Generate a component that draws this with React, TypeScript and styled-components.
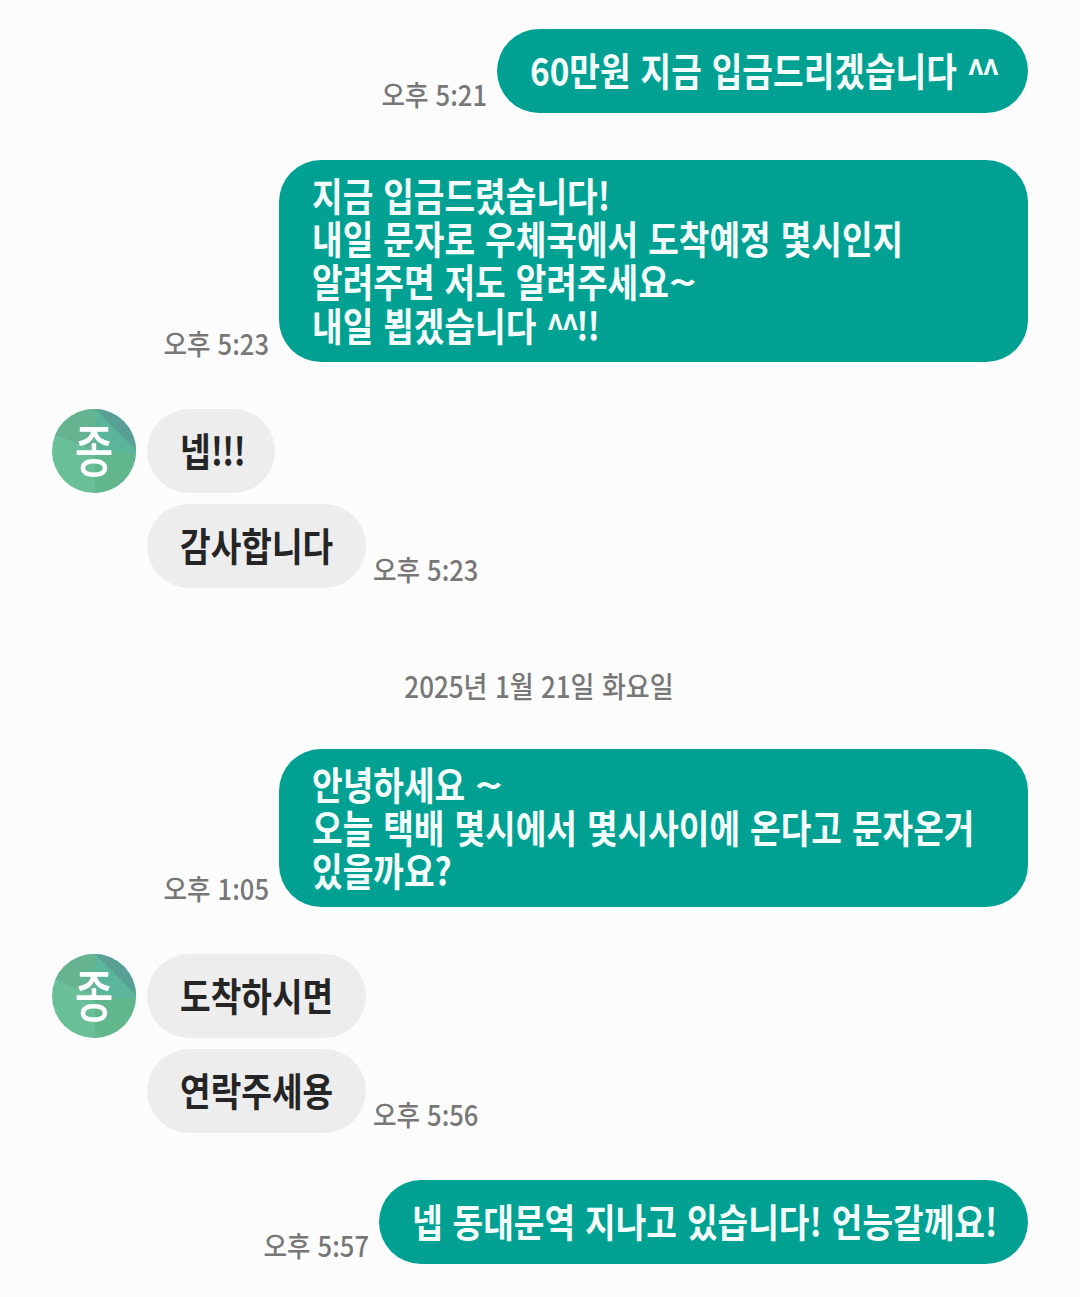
import React from "react";
import styled, { createGlobalStyle } from "styled-components";

const FONT = '"Noto Sans CJK KR", "Noto Sans", sans-serif';

const GlobalStyle = createGlobalStyle`
  *, *::before, *::after { box-sizing: border-box; }
  body { margin: 0; background: #fcfcfc; font-family: ${FONT}; }
`;

const Screen = styled.main`
  display: flex;
  flex-direction: column;
  gap: 47px;
  width: 1080px;
  height: 1297px;
  padding: 29.4px 52px 0;
  overflow: hidden;
  background: #fcfcfc;
`;

const Row = styled.div<{ $sent?: boolean }>`
  display: flex;
  align-items: flex-end;
  justify-content: ${(p) => (p.$sent ? "flex-end" : "flex-start")};
  gap: ${(p) => (p.$sent ? 10 : 7)}px;
`;

const Bubble = styled.div<{ $sent?: boolean; $height?: number; $width?: number }>`
  display: flex;
  flex-direction: column;
  justify-content: center;
  flex: none;
  width: ${(p) => (p.$width ? `${p.$width}px` : "auto")};
  height: ${(p) => p.$height ?? 84}px;
  padding: 0 32px 4px 33px;
  border-radius: 42px;
  background: ${(p) => (p.$sent ? "#00a193" : "#ededed")};
  color: ${(p) => (p.$sent ? "#f4fffd" : "#252525")};
`;

const Line = styled.span`
  display: block;
  height: 43.2px;
  font-size: 33.3px;
  font-weight: 700;
  line-height: 43.2px;
  word-spacing: 2.4px;
  white-space: pre;
  transform: scaleY(1.15);
`;

const Carets = styled.span`
  font-size: 31px;
  line-height: 0;
  letter-spacing: -3.4px;
`;

const Bangs = styled.span`
  letter-spacing: -0.9px;
`;

const Tilde = styled.span`
  display: inline-block;
  margin: 0 4px;
  line-height: 38px;
  transform: scaleX(1.4);
`;

const Time = styled.time`
  flex: none;
  height: 38px;
  font-size: 25.6px;
  font-weight: 500;
  line-height: 38px;
  word-spacing: 1.2px;
  white-space: pre;
  color: #777;
  transform: scaleY(1.12);
`;

const DateLabel = styled.div`
  height: 67px;
  margin-right: 2px;
  font-size: 26px;
  font-weight: 500;
  line-height: 102px;
  word-spacing: 1.5px;
  text-align: center;
  white-space: pre;
  color: #777;
`;

const DateText = styled.span`
  display: inline-block;
  line-height: 38px;
  transform: scaleY(1.12);
`;

const Received = styled.div`
  display: flex;
  align-items: flex-start;
  gap: 11px;
`;

const Stack = styled.div`
  display: flex;
  flex-direction: column;
  align-items: flex-start;
  gap: 11px;
`;

const AvatarBox = styled.div`
  display: grid;
  flex: none;
  width: 84px;
  height: 84px;
  > * { grid-area: 1 / 1; }
`;

const Facets = styled.svg`
  display: block;
  border-radius: 50%;
`;

const AvatarName = styled.span`
  align-self: center;
  justify-self: center;
  height: 60px;
  margin-bottom: 6px;
  font-size: 42px;
  font-weight: 500;
  line-height: 60px;
  color: #fff;
  transform: scaleY(1.36);
`;

const Avatar = ({ name }: { name: string }) => (
  <AvatarBox>
    <Facets width="84" height="84" viewBox="0 0 84 84" aria-hidden="true">
      <rect width="84" height="84" fill="#68bf98" />
      <path d="M0 24L43 42V0H0Z" fill="#66b391" />
      <path d="M43 0V43L84 45V0Z" fill="#5ab59b" />
      <path d="M43 0L84 41V0Z" fill="#589f96" />
      <path d="M43 42L84 45V84H43Z" fill="#61b78b" />
    </Facets>
    <AvatarName>{name}</AvatarName>
  </AvatarBox>
);

const Clock = ({ at }: { at: string }) => <Time>오후 {at}</Time>;

export default function App() {
  return (
    <>
      <GlobalStyle />
      <Screen>
        <Row $sent>
          <Clock at="5:21" />
          <Bubble $sent $width={531}>
            <Line>60만원 지금 입금드리겠습니다 <Carets>^^</Carets></Line>
          </Bubble>
        </Row>
        <Row $sent>
          <Clock at="5:23" />
          <Bubble $sent $width={749} $height={202}>
            <Line>지금 입금드렸습니다!</Line>
            <Line>내일 문자로 우체국에서 도착예정 몇시인지</Line>
            <Line>알려주면 저도 알려주세요<Tilde>~</Tilde></Line>
            <Line>내일 뵙겠습니다 <Carets>^^</Carets><Bangs>!!</Bangs></Line>
          </Bubble>
        </Row>
        <Received>
          <Avatar name="종" />
          <Stack>
            <Bubble $width={128}><Line>넵<Bangs>!!!</Bangs></Line></Bubble>
            <Row>
              <Bubble $width={219}><Line>감사합니다</Line></Bubble>
              <Clock at="5:23" />
            </Row>
          </Stack>
        </Received>
        <DateLabel><DateText>2025년 1월 21일 화요일</DateText></DateLabel>
        <Row $sent>
          <Clock at="1:05" />
          <Bubble $sent $width={749} $height={158}>
            <Line>안녕하세요 <Tilde>~</Tilde></Line>
            <Line>오늘 택배 몇시에서 몇시사이에 온다고 문자온거</Line>
            <Line>있을까요?</Line>
          </Bubble>
        </Row>
        <Received>
          <Avatar name="종" />
          <Stack>
            <Bubble $width={219}><Line>도착하시면</Line></Bubble>
            <Row>
              <Bubble $width={219}><Line>연락주세용</Line></Bubble>
              <Clock at="5:56" />
            </Row>
          </Stack>
        </Received>
        <Row $sent>
          <Clock at="5:57" />
          <Bubble $sent $width={649}>
            <Line>넵 동대문역 지나고 있습니다! 언능갈께요!</Line>
          </Bubble>
        </Row>
      </Screen>
    </>
  );
}
